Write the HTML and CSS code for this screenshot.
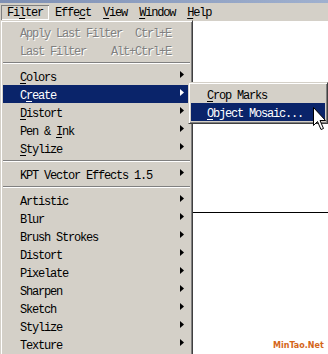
FILE: index.html
```html
<!DOCTYPE html>
<html>
<head>
<meta charset="utf-8">
<link rel="stylesheet" href="styles.css">
</head>
<body>
<div class="titlebar"></div>
<div class="menubar">
  <div class="mb-item pressed">Fi<u>l</u>ter</div>
  <div class="mb-item">Effe<u>c</u>t</div>
  <div class="mb-item"><u>V</u>iew</div>
  <div class="mb-item"><u>W</u>indow</div>
  <div class="mb-item"><u>H</u>elp</div>
</div>
<div class="workspace">
  <div class="hline"></div>
</div>

<div class="menu main-menu">
  <div class="row disabled"><span class="label">Apply Last Filter</span><span class="key">Ctrl+E</span><span class="sub"></span></div>
  <div class="row disabled"><span class="label">Last Filter</span><span class="key">Alt+Ctrl+E</span><span class="sub"></span></div>
  <div class="sep"></div>
  <div class="row"><span class="label"><u>C</u>olors</span><span class="sub"><svg width="4" height="7" viewBox="0 0 4 7"><path d="M0 0L4 3.5L0 7Z"/></svg></span></div>
  <div class="row active"><span class="label">C<u>r</u>eate</span><span class="sub"><svg width="4" height="7" viewBox="0 0 4 7"><path d="M0 0L4 3.5L0 7Z"/></svg></span></div>
  <div class="row"><span class="label"><u>D</u>istort</span><span class="sub"><svg width="4" height="7" viewBox="0 0 4 7"><path d="M0 0L4 3.5L0 7Z"/></svg></span></div>
  <div class="row"><span class="label">Pen &amp; <u>I</u>nk</span><span class="sub"><svg width="4" height="7" viewBox="0 0 4 7"><path d="M0 0L4 3.5L0 7Z"/></svg></span></div>
  <div class="row"><span class="label"><u>S</u>tylize</span><span class="sub"><svg width="4" height="7" viewBox="0 0 4 7"><path d="M0 0L4 3.5L0 7Z"/></svg></span></div>
  <div class="sep"></div>
  <div class="row"><span class="label">KPT Vector Effects 1.5</span><span class="sub"><svg width="4" height="7" viewBox="0 0 4 7"><path d="M0 0L4 3.5L0 7Z"/></svg></span></div>
  <div class="sep"></div>
  <div class="row"><span class="label">Artistic</span><span class="sub"><svg width="4" height="7" viewBox="0 0 4 7"><path d="M0 0L4 3.5L0 7Z"/></svg></span></div>
  <div class="row"><span class="label">Blur</span><span class="sub"><svg width="4" height="7" viewBox="0 0 4 7"><path d="M0 0L4 3.5L0 7Z"/></svg></span></div>
  <div class="row"><span class="label">Brush Strokes</span><span class="sub"><svg width="4" height="7" viewBox="0 0 4 7"><path d="M0 0L4 3.5L0 7Z"/></svg></span></div>
  <div class="row"><span class="label">Distort</span><span class="sub"><svg width="4" height="7" viewBox="0 0 4 7"><path d="M0 0L4 3.5L0 7Z"/></svg></span></div>
  <div class="row"><span class="label">Pixelate</span><span class="sub"><svg width="4" height="7" viewBox="0 0 4 7"><path d="M0 0L4 3.5L0 7Z"/></svg></span></div>
  <div class="row"><span class="label">Sharpen</span><span class="sub"><svg width="4" height="7" viewBox="0 0 4 7"><path d="M0 0L4 3.5L0 7Z"/></svg></span></div>
  <div class="row"><span class="label">Sketch</span><span class="sub"><svg width="4" height="7" viewBox="0 0 4 7"><path d="M0 0L4 3.5L0 7Z"/></svg></span></div>
  <div class="row"><span class="label">Stylize</span><span class="sub"><svg width="4" height="7" viewBox="0 0 4 7"><path d="M0 0L4 3.5L0 7Z"/></svg></span></div>
  <div class="row"><span class="label">Texture</span><span class="sub"><svg width="4" height="7" viewBox="0 0 4 7"><path d="M0 0L4 3.5L0 7Z"/></svg></span></div>
</div>

<div class="menu sub-menu">
  <div class="row"><span class="label"><u>C</u>rop Marks</span></div>
  <div class="row active"><span class="label"><u>O</u>bject Mosaic...</span></div>
</div>

<svg class="cursor" width="14" height="24" viewBox="0 0 14 24">
  <path d="M0.5 0.5 L0.5 18.5 L4.5 14.5 L8 22.5 L10.5 21.5 L7 13.5 L12.5 13.5 Z" fill="#fff" stroke="#000" stroke-width="1" stroke-linejoin="miter"/>
</svg>

<div class="watermark">MinTao.Net</div>
</body>
</html>
```

FILE: styles.css
```css
html, body {
  margin: 0;
  padding: 0;
  overflow: hidden;
}

body {
  width: 328px;
  height: 354px;
  position: relative;
  background: #d4d0c8;
  color: #000;
  font-family: "Liberation Mono", "DejaVu Sans Mono", monospace;
  font-size: 12px;
  letter-spacing: -1.2px;
}

u {
  text-decoration: underline;
  text-underline-offset: 2px;
}

.titlebar {
  height: 3px;
  background: linear-gradient(90deg, #7f90b4, #9fb0cf);
}

.menubar {
  height: 18px;
  box-sizing: border-box;
  padding: 2px 0 0 1px;
  display: flex;
  background: #d4d0c8;
}

.mb-item {
  height: 15px;
  line-height: 17px;
  padding: 0 6px;
  box-sizing: border-box;
}

.mb-item.pressed {
  box-shadow: inset 1px 1px #808080, inset -1px -1px #fff;
}

.workspace {
  height: 333px;
  background: #fff;
  padding-top: 191px;
  box-sizing: border-box;
}

.hline {
  border-top: 1px solid #000;
}

.menu {
  position: absolute;
  box-sizing: border-box;
  background: #d4d0c8;
  border: 1px solid;
  border-color: #d4d0c8 #404040 #404040 #d4d0c8;
  box-shadow: inset 1px 1px #fff, inset -1px -1px #808080;
  padding: 2px;
}

.main-menu {
  left: 0;
  top: 20px;
  width: 193px;
}

.sub-menu {
  left: 188px;
  top: 82px;
  width: 140px;
}

.row {
  display: flex;
  height: 18px;
  line-height: 22px;
  padding: 0 6px 0 17px;
  white-space: pre;
}

.sub-menu .row {
  padding-left: 16px;
}

.row .label {
  flex: 1;
}

.row .sub {
  width: 13px;
  height: 18px;
  display: flex;
  justify-content: flex-end;
  align-items: flex-start;
  padding-top: 4px;
  box-sizing: border-box;
}

.row .sub svg {
  display: block;
  fill: #000;
}

.row.active {
  background: #0a246a;
  color: #fff;
}

.row.active .sub svg {
  fill: #fff;
}

.row.disabled {
  color: #808080;
  text-shadow: 1px 1px 0 #fff;
}

.sep {
  height: 8px;
  box-sizing: border-box;
  padding-top: 3px;
}

.sep::before {
  content: "";
  display: block;
  height: 0;
  border-top: 1px solid #808080;
  border-bottom: 1px solid #fff;
}

.cursor {
  position: absolute;
  left: 313px;
  top: 107px;
}

.watermark {
  position: absolute;
  left: 273px;
  top: 341px;
  font-family: "DejaVu Sans", sans-serif;
  font-size: 8px;
  font-weight: bold;
  letter-spacing: 0;
  color: #d4661a;
}
```
